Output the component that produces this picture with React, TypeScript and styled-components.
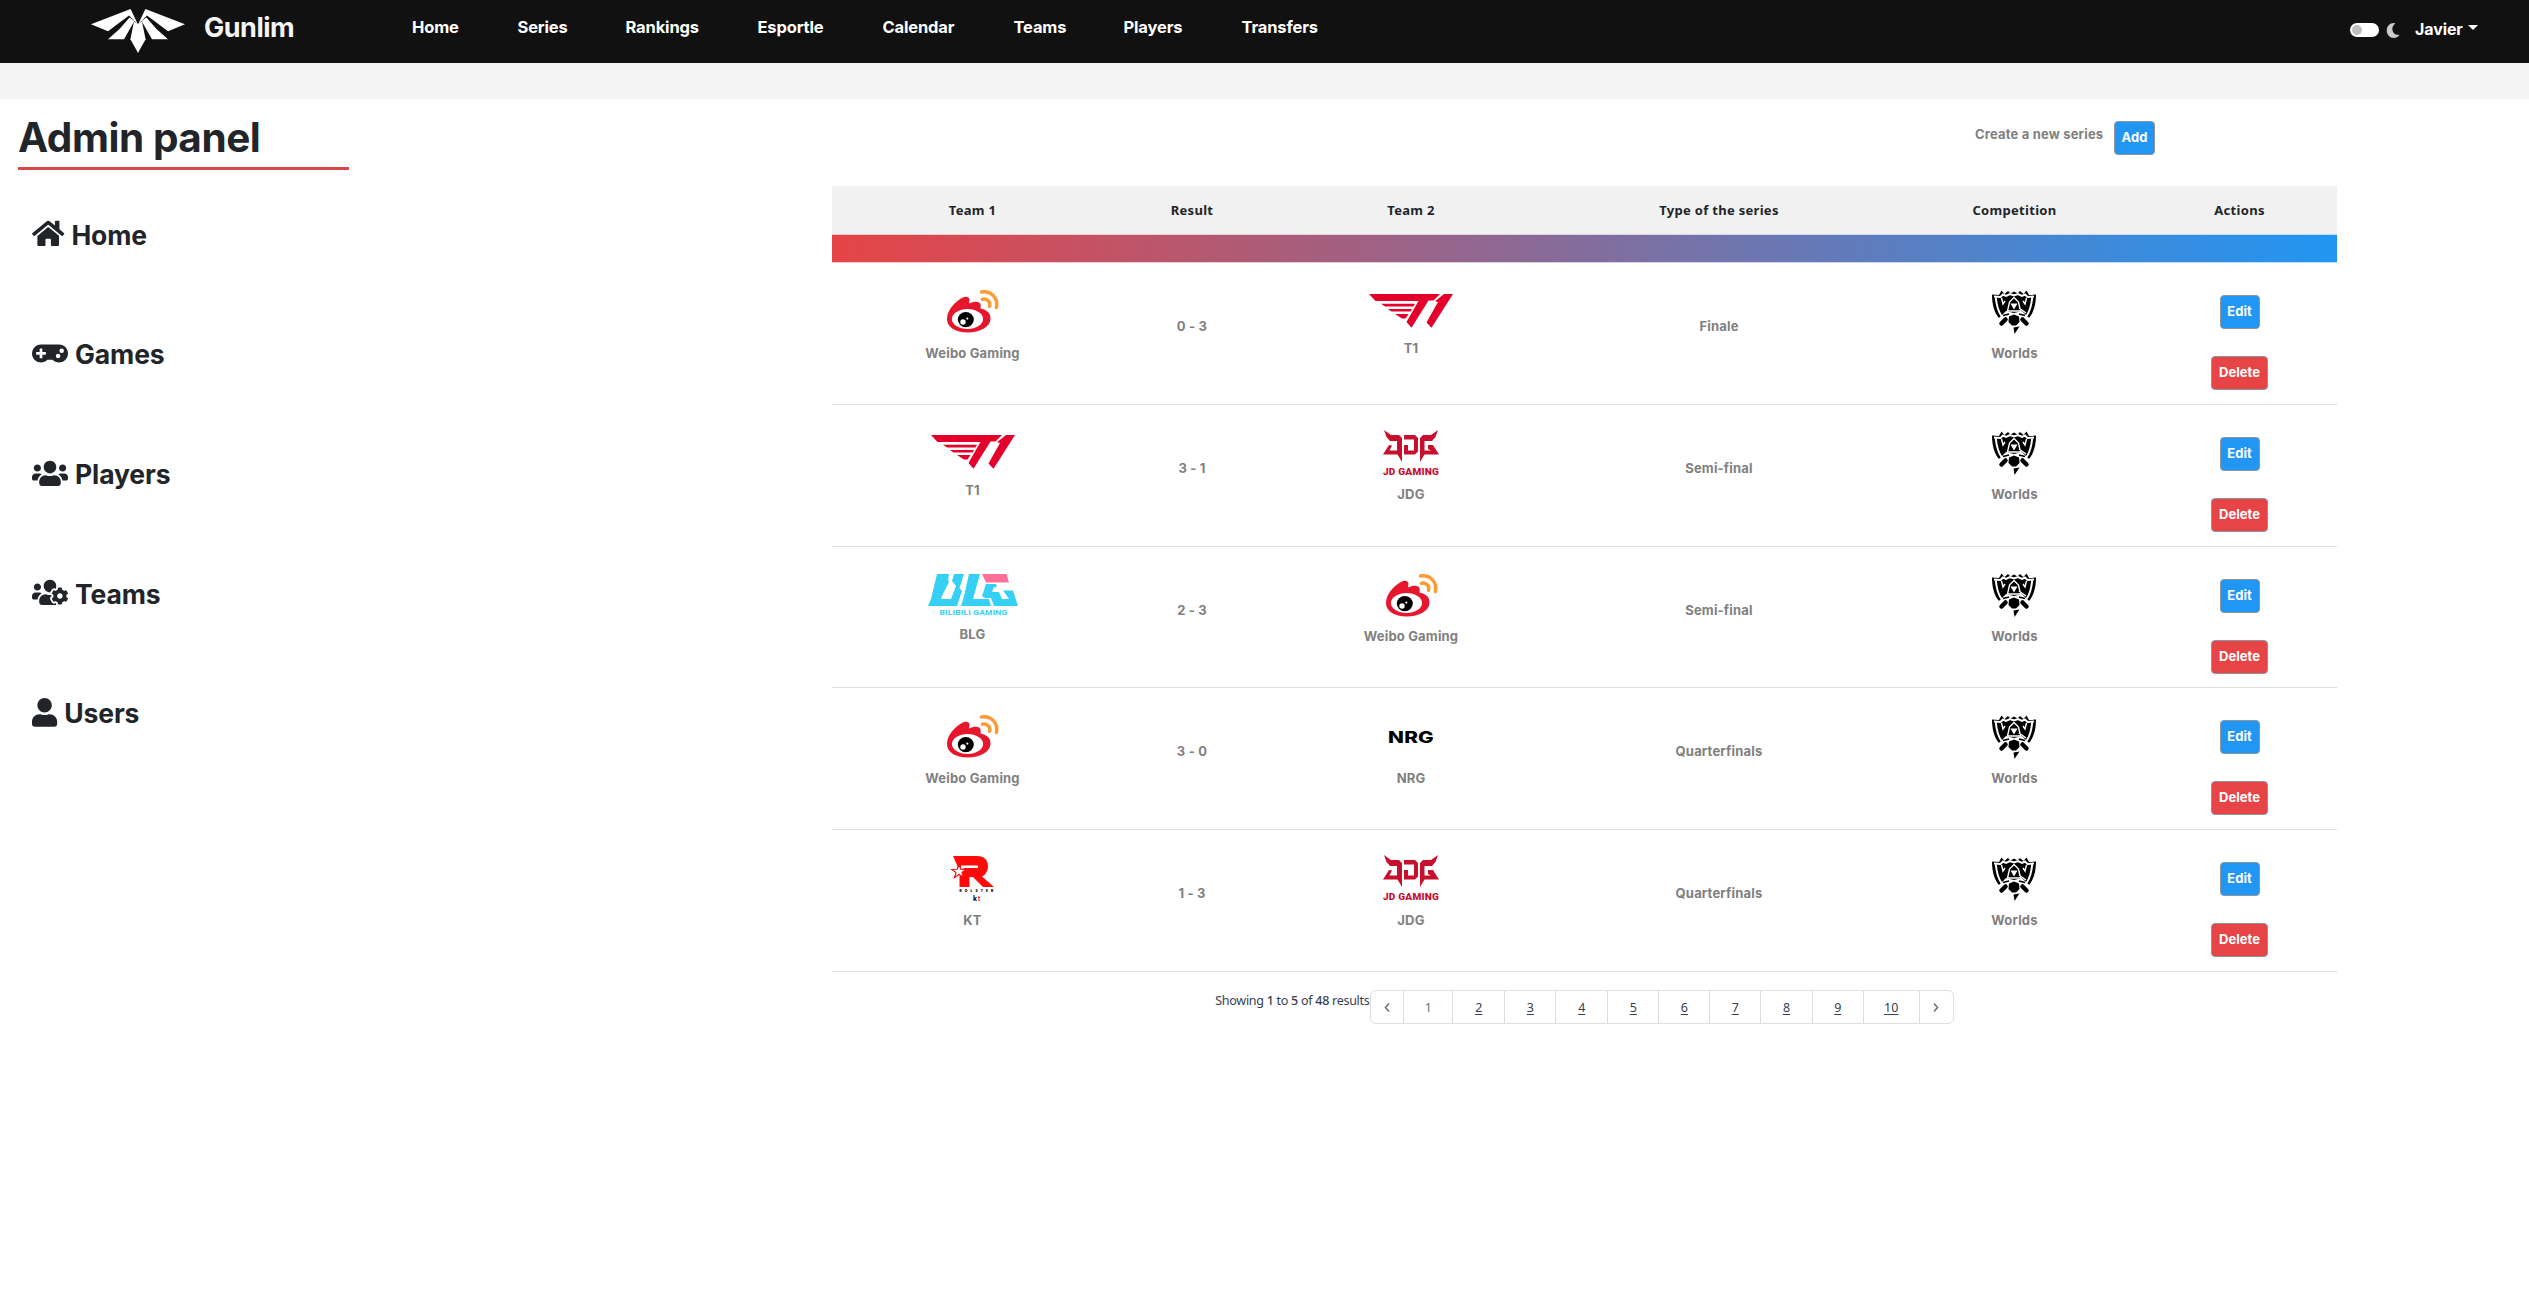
import React from 'react';
import styled, { createGlobalStyle, css } from 'styled-components';
import { FaHome, FaGamepad, FaUsers, FaUsersCog, FaUser, FaMoon } from 'react-icons/fa';

const GlobalStyle = createGlobalStyle`
  *, *::before, *::after { box-sizing: border-box; }
  body { margin: 0; background: #fff; color: #212529; font-family: Inter, "Noto Sans", sans-serif; }
  svg { display: block; flex: none; overflow: visible; }
`;

const Page = styled.div`
  min-height: 1295px;
  background: #fff;
`;

/* ---------- top bar ---------- */

const Navbar = styled.header`
  display: flex;
  height: 63px;
  padding: 0 51px 0 91px;
  background: #111;
  color: #fff;
`;

const Brand = styled.a`
  display: flex;
  width: 321px;
  gap: 19px;
  line-height: 55px;
  font-size: 27px;
  font-weight: 700;
  letter-spacing: -0.5px;
  color: #f4f4f4;
  svg { margin-top: 9px; }
`;

const NavLinks = styled.nav`
  display: flex;
  flex: 1;
  gap: 58px;
  line-height: 54px;
  font-size: 16.5px;
  font-weight: 700;
`;

const NavLink = styled.a<{ $w: number }>`
  width: ${p => p.$w}px;
  white-space: nowrap;
  letter-spacing: -0.15px;
`;

const UserArea = styled.div`
  display: flex;
  align-items: center;
  height: 60px;
`;

const Toggle = styled.span`
  display: flex;
  align-items: center;
  width: 29px;
  height: 14px;
  padding: 0 2px;
  border-radius: 7px;
  background: #fff;
  &::before {
    content: '';
    width: 10px;
    height: 10px;
    border-radius: 50%;
    background: #bfbfbf;
  }
`;

const Moon = styled(FaMoon)`
  width: 14px;
  height: 15px;
  margin: 0 15px 0 7px;
  color: #ccc;
`;

const UserName = styled.span`
  width: 48px;
  font-size: 16px;
  font-weight: 700;
  line-height: 58px;
  letter-spacing: -0.1px;
  margin-bottom: 2px;
`;

const Caret = styled.span`
  margin: -5px 0 0 5px;
  border: 5px solid transparent;
  border-top-color: #fff;
  border-bottom: 0;
`;

const SubBar = styled.div`
  height: 36px;
  background: #f4f4f4;
`;

/* ---------- layout ---------- */

const Body = styled.div`
  display: flex;
`;

const Sidebar = styled.aside`
  width: 832px;
  padding: 9px 0 0 18px;
`;

const Title = styled.h1`
  width: 331px;
  margin: 0 0 5px;
  border-bottom: 3px solid #d9484b;
  font-size: 40.5px;
  font-weight: 700;
  line-height: 59px;
  letter-spacing: -0.45px;
`;

const SideLink = styled.a`
  display: flex;
  align-items: center;
  gap: 7px;
  height: 119.6px;
  padding-left: 14px;
  font-size: 26.5px;
  font-weight: 700;
  letter-spacing: -0.1px;
`;

const Main = styled.main`
  width: 1505px;
`;

const CreateRow = styled.div`
  display: flex;
  align-items: flex-start;
  gap: 11px;
  height: 87px;
  padding: 22px 0 0 1143px;
`;

const grey = css`
  color: #808080;
  font-size: 13px;
  font-weight: 700;
  letter-spacing: 0.18px;
`;

const CreateLabel = styled.span`
  ${grey}
  width: 128px;
  line-height: 26px;
  white-space: nowrap;
`;

const Button = styled.button<{ $tone: string; $w: number }>`
  width: ${p => p.$w}px;
  height: 34px;
  padding: 0 0 2px;
  border: 1px solid #8f959c;
  border-radius: 4px;
  background: ${p => p.$tone};
  color: #fff;
  font: 700 13px Inter, sans-serif;
  text-align: center;
  white-space: nowrap;
`;

/* ---------- table ---------- */

const columns = css`
  display: grid;
  grid-template-columns: 281px 158px 280px 336px 255px 195px;
  justify-items: center;
`;

const HeadRow = styled.div`
  ${columns}
  height: 48px;
  background: #f1f1f1;
  font: 700 13px/48px "Noto Sans", sans-serif;
  letter-spacing: 0.3px;
`;

const GradientBar = styled.div`
  height: 29px;
  border: solid rgba(255, 255, 255, 0.7);
  border-width: 1px 0;
  background: linear-gradient(90deg, #e64446, #2196f3) border-box;
`;

const Rows = styled.div`
  display: grid;
  grid-template-rows: repeat(5, 141.8px);
`;

const Row = styled.div`
  ${columns}
  ${grey}
  border-bottom: 1px solid #dcdee0;
`;

const Text = styled.span`
  line-height: 126px;
`;

const Entity = styled.div<{ $top: number; $gap: number }>`
  display: flex;
  flex-direction: column;
  align-items: center;
  gap: ${p => p.$gap}px;
  padding-top: ${p => p.$top}px;
  line-height: 20px;
`;

const Actions = styled.div`
  display: flex;
  flex-direction: column;
  align-items: center;
  gap: 27px;
  padding-top: 32px;
`;

/* ---------- pagination ---------- */

const Footer = styled.div`
  display: flex;
  align-items: flex-start;
  justify-content: center;
  padding-top: 18px;
  font-family: "Noto Sans", sans-serif;
  color: #374151;
`;

const Summary = styled.span`
  width: 155px;
  font-size: 12.5px;
  line-height: 22px;
  letter-spacing: -0.27px;
  white-space: nowrap;
  b { font-weight: 500; }
`;

const Pager = styled.div`
  display: flex;
  height: 34px;
  border: 1px solid #dcdee1;
  border-radius: 6px;
`;

const PageCell = styled.a<{ $w: number; $plain?: boolean }>`
  display: flex;
  align-items: center;
  justify-content: center;
  width: ${p => p.$w}px;
  padding-top: 1px;
  font-size: 12.5px;
  font-weight: 400;
  color: ${p => (p.$plain ? '#6b7280' : '#374151')};
  text-decoration: ${p => (p.$plain ? 'none' : 'underline')};
  text-underline-offset: 2px;
  & + & { border-left: 1px solid #dcdee1; }
`;

/* ---------- drawings ---------- */

const BrandMark = () => (
  <svg width="94" height="44" viewBox="0 0 94 44" fill="#fff">
    {['', 'translate(94 0) scale(-1 1)'].map(t => (
      <g key={t} transform={t}>
        <path d="M0 15.300 39.600 0 47 15.500 38 6.500 17 22.300Z" />
        <path d="M17 30.300 28.500 20 38.600 8.500 43.400 12 33 30.300Z" />
        <path d="M47.100 44 39.400 30.300 43 12.500 47.100 15Z" />
      </g>
    ))}
  </svg>
);

const Weibo = () => (
  <svg width="50" height="43" viewBox="0 0 50 43">
    <path fill="#e6162d" d="M0 29C0 20 8 12 14 8.500C18 6 22 6 22.500 9.500L22 13.500C27 11 33 11 33.500 14.500C34 17 33.500 18 33.500 18.500C38 19.500 44 22 43.500 29C43 37 33 42.500 21 42.500C8 42.500 0 37 0 29Z" />
    <ellipse cx="20.500" cy="29" rx="15.600" ry="10" fill="#fff" />
    <ellipse cx="18.800" cy="29.600" rx="8" ry="7.600" fill="#000" />
    <circle cx="16" cy="32" r="2.700" fill="#fff" />
    <circle cx="20.300" cy="28.600" r="1.100" fill="#fff" />
    <g fill="none" stroke="#ff9933" strokeWidth="3.500" strokeLinecap="round">
      <path d="M34.500 2C44 .500 51.500 8 49.400 17.500" />
      <path d="M35.500 9.300C40 8.300 43.800 11.800 42.500 16.200" />
    </g>
  </svg>
);

const T1 = () => (
  <svg width="84" height="34" viewBox="0 0 84 34" fill="#e4002b">
    <path d="M0 0H71L64.500 6.500H59.500L42.500 33.800 37.500 28 49.500 7H6.500Z" />
    <path d="M75 0H84L62.500 33.800 57.500 28.500 69 8 66 7.300Z" />
    <path d="M12 9.700H46L44.500 12.500H16ZM19 15H43L41.500 17.500H22.500ZM26 20H39.500L36.500 24.500H33Z" />
  </svg>
);

const Jdg = () => (
  <svg width="56" height="46" viewBox="0 0 56 46" fill="#c8102e">
    <path d="M1 0 8 5H16L19 8V32L14.500 24.500H0L6 15 9 15.500 6.500 20.500H14V11H7L3.500 7Z" />
    <path d="M21 5H32L35 8V21.500L32 24.500H21V15H25V20.500H31V9.500H21Z" />
    <path d="M55 0 48 5H40L37 8V32L41.500 24.500H56L50 15H45V19L48 20.500H41.500V11H49L52.500 7Z" />
    <text x="0" y="45.300" fontFamily="Roboto, sans-serif" fontWeight="900" fontSize="8.600" textLength="56" lengthAdjust="spacingAndGlyphs">JD GAMING</text>
  </svg>
);

const Blg = () => (
  <svg width="90" height="42" viewBox="0 0 90 42" fill="#37d0f5">
    <path d="M9 0H21L20 6 21 8 14.500 21 13 25H23L28 12 24 7 26 0H36L31.500 14 34 17 29 32H0L3 25Z" />
    <path d="M41 0H52L45 25H61L63 32H33L36 22Z" />
    <path d="M58 10H68L69 13H66L64 18H71L74 25H81L75 16.500H85L90 32H66L63 24H57L54 22Z" />
    <path fill="#ff7099" d="M54 0H78.500L81 8.500H58Z" />
    <text x="11.500" y="41.300" fontFamily="Roboto, sans-serif" fontWeight="700" fontSize="7.500" textLength="68" lengthAdjust="spacingAndGlyphs">BILIBILI GAMING</text>
  </svg>
);

const Nrg = () => (
  <svg width="46" height="12" viewBox="0 0 46 12">
    <text x="0" y="11.500" fontFamily="Inter, sans-serif" fontWeight="800" fontSize="15.600" textLength="46" lengthAdjust="spacingAndGlyphs">NRG</text>
  </svg>
);

const Kt = () => (
  <svg width="43" height="46" viewBox="0 0 43 46">
    <path fill="#ff0a0a" d="M2 0H26C33 0 37 4 37 10C37 15 34.500 19 31 20.500L43 31H32L22 21H18.500V31H8.500V20L6 9Z" />
    <path fill="#fff" d="M10 9.500H27V12H14L10 13Z" />
    <path fill="#fff" stroke="#ff0a0a" strokeWidth="1.100" d="M8 9 9.800 13.200 15 13.500 11 16.500 12.500 21.500 8 18.500 3.500 21.500 5 16.500.800 13.500 6.200 13.200Z" />
    <text x="8.500" y="36.300" fontFamily="Inter, sans-serif" fontWeight="900" fontSize="3.300" textLength="34">ROLSTER</text>
    <text x="22" y="44.800" fontFamily="Inter, sans-serif" fontWeight="700" fontSize="7" textLength="7.500">k<tspan fill="#e03030">t</tspan></text>
  </svg>
);

const Worlds = () => (
  <svg width="44" height="44" viewBox="0 0 44 44">
    <path fill="#000" d="M0 4.500 7 5 9.500 .500 12.500 4 16 1 18.500 3.500 22 1.500 25.500 3.500 28 1 31.500 4 34.500 .500 37 5 44 4.500C44 14 42 22 37 28L30 24H14L7 28C2 22 0 14 0 4.500Z" />
    <path fill="none" stroke="#fff" strokeWidth="2" d="M2 6.500 8.500 7 11 4.500 14 6 18 4 22 5.500 26 4 30 6 33 4.500 35.500 7 42 6.500M3.800 7.500C4.500 15 6 21 9.500 26M40.200 7.500C39.500 15 38 21 34.500 26" />
    <path fill="none" stroke="#fff" strokeWidth="1.400" d="M22 7.500 17.500 12 15.500 21 28.500 21 26.500 12ZM9.500 8 11 14 13 11M34.500 8 33 14 31 11M27 18 34 23" />
    <path fill="#fff" d="M18.500 13.500H25.500L22 19.500ZM6.500 28.500 14 21 22 23 30 21 37.500 28.500 31 27 28 32H16L13 27Z" />
    <path fill="#000" d="M17 26.500 22 24.500 27 26.500 27.500 32 24 35.500H20L16.500 32Z" />
    <path stroke="#000" strokeWidth="4.500" strokeLinecap="round" d="M13.500 29.500 9.500 33.500M30.500 29.500 34.500 33.500" />
    <path stroke="#000" strokeWidth="1.600" d="M11 25.500 17 24M33 25.500 27 24" />
    <path fill="#000" d="M21.500 37.500 27.500 36.500 22.500 44Z" />
  </svg>
);

/* ---------- data ---------- */

const entities = {
  weibo: { name: 'Weibo Gaming', Logo: Weibo, top: 27, gap: 9.5 },
  t1: { name: 'T1', Logo: T1, top: 30.5, gap: 10.5 },
  jdg: { name: 'JDG', Logo: Jdg, top: 25, gap: 8.5 },
  blg: { name: 'BLG', Logo: Blg, top: 27, gap: 8.5 },
  nrg: { name: 'NRG', Logo: Nrg, top: 42.5, gap: 25.5 },
  kt: { name: 'KT', Logo: Kt, top: 26, gap: 8 },
  worlds: { name: 'Worlds', Logo: Worlds, top: 26.5, gap: 9 },
};
type EntityId = keyof typeof entities;

const series: { home: EntityId; score: string; away: EntityId; type: string }[] = [
  { home: 'weibo', score: '0 - 3', away: 't1', type: 'Finale' },
  { home: 't1', score: '3 - 1', away: 'jdg', type: 'Semi-final' },
  { home: 'blg', score: '2 - 3', away: 'weibo', type: 'Semi-final' },
  { home: 'weibo', score: '3 - 0', away: 'nrg', type: 'Quarterfinals' },
  { home: 'kt', score: '1 - 3', away: 'jdg', type: 'Quarterfinals' },
];

const navLinks: [string, number][] = [
  ['Home', 47.5], ['Series', 50], ['Rankings', 74], ['Esportle', 67],
  ['Calendar', 73], ['Teams', 52], ['Players', 60], ['Transfers', 77],
];

const sideLinks = [
  { label: 'Home', Icon: FaHome, w: 32.4 },
  { label: 'Games', Icon: FaGamepad, w: 36 },
  { label: 'Players', Icon: FaUsers, w: 36 },
  { label: 'Teams', Icon: FaUsersCog, w: 36 },
  { label: 'Users', Icon: FaUser, w: 25.2 },
];

const SideIcon = styled.span<{ $w: number }>`
  width: ${p => p.$w}px;
  margin-top: -2px;
  svg { width: 100%; height: 28.8px; }
`;

const pageWidths = [49, 52, 51, 52, 51, 51, 51, 51.5, 51, 56];

const Badge = ({ id }: { id: EntityId }) => {
  const { name, Logo, top, gap } = entities[id];
  return (
    <Entity $top={top} $gap={gap}>
      <Logo />
      <span>{name}</span>
    </Entity>
  );
};

const Chevron = ({ d }: { d: string }) => (
  <svg width="6" height="9" viewBox="0 0 6 9" fill="none" stroke="#6b7280" strokeWidth="1.600">
    <path d={d} />
  </svg>
);

export default function App() {
  return (
    <Page>
      <GlobalStyle />
      <Navbar>
        <Brand><BrandMark />Gunlim</Brand>
        <NavLinks>
          {navLinks.map(([label, w]) => <NavLink key={label} $w={w}>{label}</NavLink>)}
        </NavLinks>
        <UserArea>
          <Toggle />
          <Moon preserveAspectRatio="none" />
          <UserName>Javier</UserName>
          <Caret />
        </UserArea>
      </Navbar>
      <SubBar />
      <Body>
        <Sidebar>
          <Title>Admin panel</Title>
          {sideLinks.map(({ label, Icon, w }) => (
            <SideLink key={label}>
              <SideIcon $w={w}><Icon /></SideIcon>
              {label}
            </SideLink>
          ))}
        </Sidebar>
        <Main>
          <CreateRow>
            <CreateLabel>Create a new series</CreateLabel>
            <Button $tone="#2196f3" $w={41}>Add</Button>
          </CreateRow>
          <HeadRow>
            {['Team 1', 'Result', 'Team 2', 'Type of the series', 'Competition', 'Actions'].map(h => <span key={h}>{h}</span>)}
          </HeadRow>
          <GradientBar />
          <Rows>
            {series.map((s, i) => (
              <Row key={i}>
                <Badge id={s.home} />
                <Text>{s.score}</Text>
                <Badge id={s.away} />
                <Text>{s.type}</Text>
                <Badge id="worlds" />
                <Actions>
                  <Button $tone="#2196f3" $w={40}>Edit</Button>
                  <Button $tone="#e64446" $w={57}>Delete</Button>
                </Actions>
              </Row>
            ))}
          </Rows>
          <Footer>
            <Summary>Showing <b>1</b> to <b>5</b> of <b>48</b> results</Summary>
            <Pager>
              <PageCell $w={32} $plain><Chevron d="M5 .500 1.500 4.500 5 8.500" /></PageCell>
              {pageWidths.map((w, i) => <PageCell key={i} $w={w} $plain={i === 0}>{i + 1}</PageCell>)}
              <PageCell $w={34} $plain><Chevron d="M1 .500 4.500 4.500 1 8.500" /></PageCell>
            </Pager>
          </Footer>
        </Main>
      </Body>
    </Page>
  );
}
